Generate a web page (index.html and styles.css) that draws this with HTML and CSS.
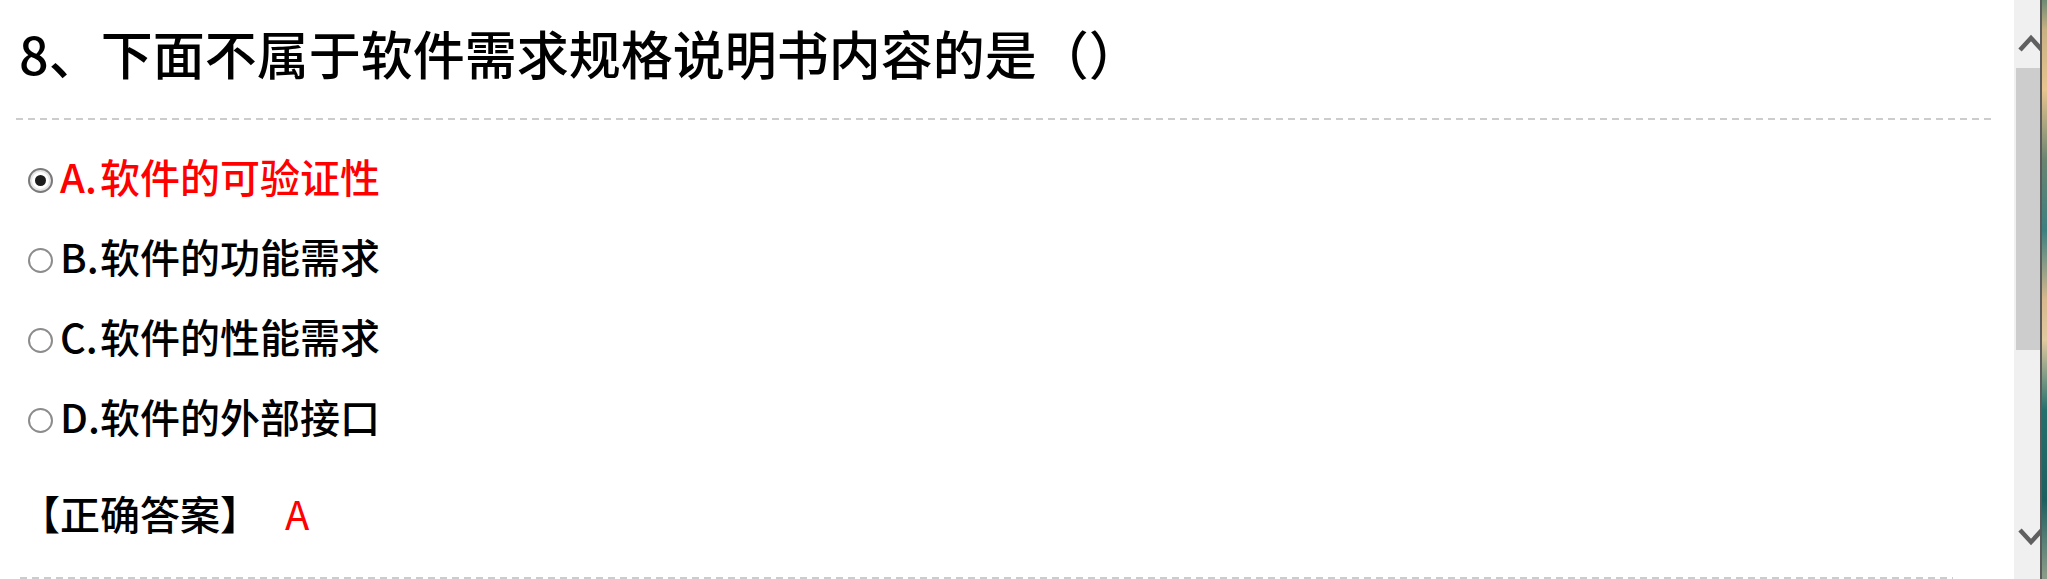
FILE: index.html
```html
<!DOCTYPE html>
<html lang="zh-CN">
<head>
<meta charset="utf-8">
<title>题目</title>
<link rel="stylesheet" href="styles.css">
</head>
<body>
<div class="window">
  <main class="content">
    <h2 class="q-title">8、下面不属于软件需求规格说明书内容的是（）</h2>
    <div class="rule rule-top"></div>
    <ul class="options">
      <li class="option selected"><span class="radio checked"></span><span class="opt-key">A.</span>软件的可验证性</li>
      <li class="option"><span class="radio"></span><span class="opt-key">B.</span>软件的功能需求</li>
      <li class="option"><span class="radio"></span><span class="opt-key">C.</span>软件的性能需求</li>
      <li class="option"><span class="radio"></span><span class="opt-key">D.</span>软件的外部接口</li>
    </ul>
    <div class="answer">【正确答案】<span class="answer-val">A</span></div>
    <div class="rule rule-bottom"></div>
  </main>
  <div class="scrollbar">
    <div class="sb-btn sb-up">
      <svg width="34" height="18" viewBox="0 0 34 18"><polyline points="6,16 17,4 28,16" fill="none" stroke="#606060" stroke-width="4.5"/></svg>
    </div>
    <div class="sb-track"><div class="sb-thumb"></div></div>
    <div class="sb-btn sb-down">
      <svg width="34" height="18" viewBox="0 0 34 18"><polyline points="6,2 17,14 28,2" fill="none" stroke="#606060" stroke-width="4.5"/></svg>
    </div>
  </div>
  <div class="frame-edge"></div>
  <div class="wallpaper"></div>
</div>
</body>
</html>
```
FILE: styles.css
```css
html, body {
  margin: 0;
  padding: 0;
  background: #fff;
}
.window {
  display: flex;
  width: 2047px;
  height: 579px;
  overflow: hidden;
  background: #fff;
}
.content {
  flex: 1;
  min-width: 0;
  padding-left: 16px;
  padding-right: 20px;
  font-family: "Noto Sans CJK SC", "Liberation Sans", sans-serif;
  font-weight: 500;
  color: #000;
}
.q-title {
  margin: 0;
  padding-top: 22px;
  padding-left: 3px;
  height: 62px;
  font-size: 52px;
  font-weight: 500;
  line-height: 62px;
  white-space: nowrap;
}
.rule {
  height: 2px;
  background: repeating-linear-gradient(to right, #cccccc 0 7px, transparent 7px 12px);
}
.rule-top {
  margin-top: 34px;
}
.options {
  list-style: none;
  margin: 16px 0 0;
  padding: 0 0 0 12px;
}
.option {
  display: flex;
  align-items: center;
  height: 80px;
  font-size: 40px;
  line-height: 48px;
}
.option.selected {
  color: #ff0000;
}
.radio {
  flex: none;
  box-sizing: border-box;
  width: 25px;
  height: 25px;
  margin-top: 8px;
  margin-right: 7px;
  border: 2px solid #8c8c8c;
  border-radius: 50%;
  background: #fff;
  display: flex;
  align-items: center;
  justify-content: center;
}
.radio.checked {
  border-color: #7a7a7a;
  box-shadow: inset 0 0 0 2px #e6e6e6;
}
.radio.checked::after {
  content: "";
  width: 11px;
  height: 11px;
  border-radius: 50%;
  background: #1c1c1c;
}
.opt-key {
  flex: none;
  width: 40px;
}
.answer {
  display: flex;
  align-items: center;
  margin-top: 33px;
  height: 49px;
  padding-left: 4px;
  font-size: 40px;
  line-height: 49px;
}
.answer-val {
  color: #ff0000;
  margin-left: 25px;
  font-weight: normal;
}
.rule-bottom {
  margin-top: 39px;
  margin-left: 4px;
  margin-right: 41px;
}
.scrollbar {
  flex: none;
  width: 26px;
  height: 579px;
  overflow: hidden;
  background: #f0f0f0;
  display: flex;
  flex-direction: column;
}
.sb-btn {
  flex: none;
  height: 68px;
  width: 34px;
}
.sb-btn svg {
  display: block;
}
.sb-up {
  padding-top: 34px;
  box-sizing: border-box;
}
.sb-down {
  padding-top: 17px;
  box-sizing: border-box;
}
.sb-track {
  flex: 1;
  padding-left: 2px;
}
.sb-thumb {
  height: 282px;
  background: #cdcdcd;
}
.frame-edge {
  flex: none;
  width: 2px;
  background: #5a5a5a;
}
.wallpaper {
  flex: none;
  width: 5px;
  background: linear-gradient(to bottom, #6f8a74 0px, #c9b184 30px, #e8c490 90px, #6a8470 160px, #3c8080 230px, #d8b88e 300px, #e2c9a0 340px, #24706c 410px, #1d6060 500px, #8a9a88 575px);
}
```
